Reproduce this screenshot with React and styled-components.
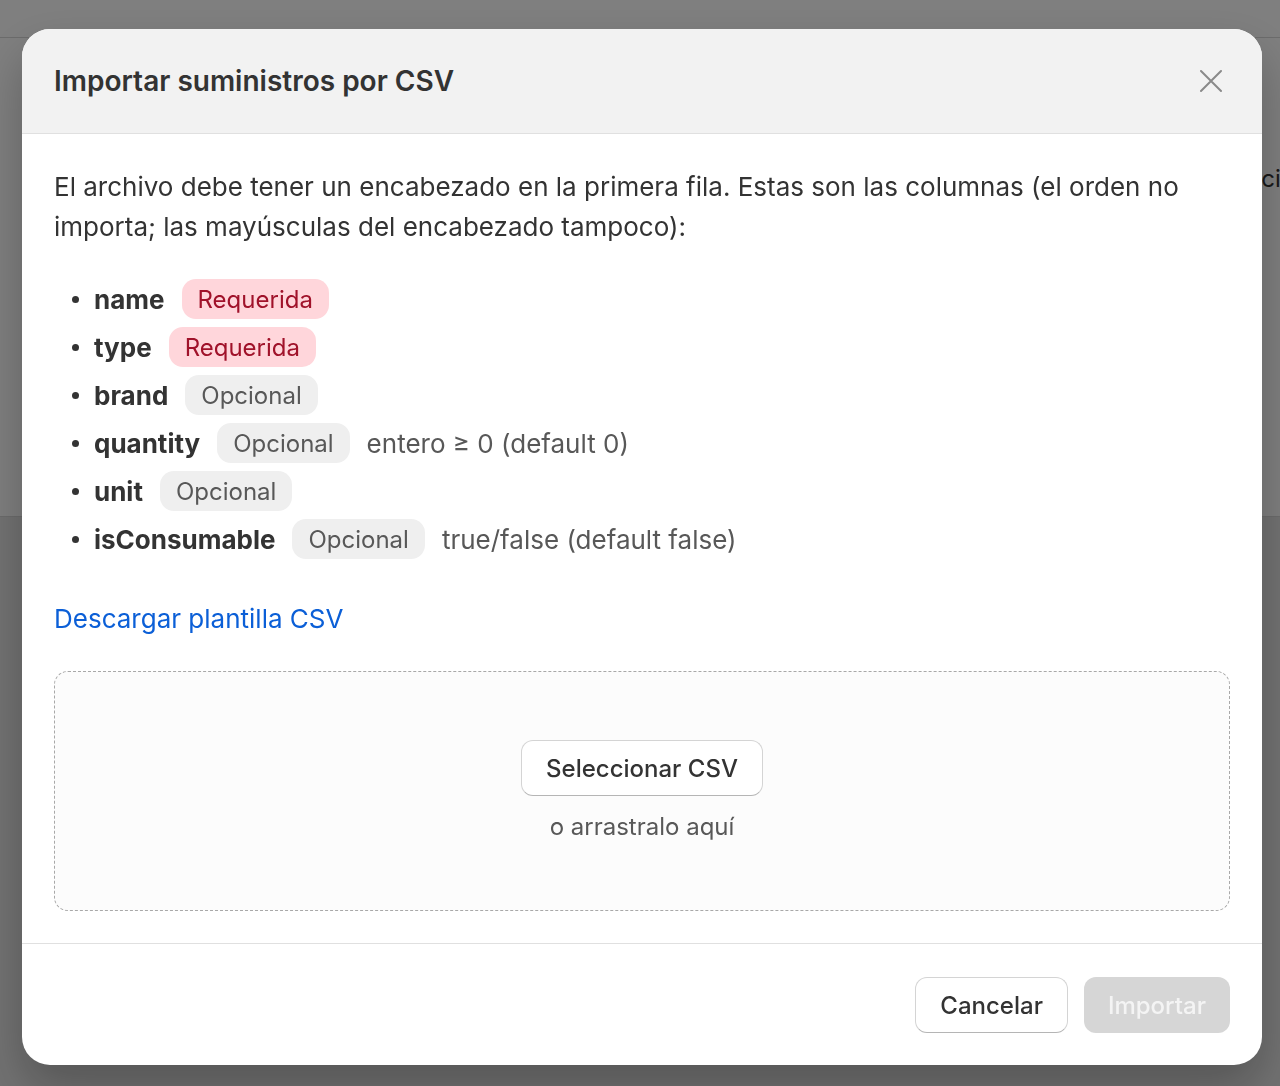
import React from 'react'
import styled, { createGlobalStyle } from 'styled-components'

const GlobalStyle = createGlobalStyle`
	* { box-sizing: border-box; }
	html, body { margin: 0; padding: 0; }
	body {
		font-family: Inter, "Noto Sans", "Liberation Sans", sans-serif;
		background: #e5e5e5;
		color: #333;
		overflow: hidden;
	}
`

const Page = styled.div`
	height: 1086px;
	display: flex;
	flex-direction: column;
`

const TopBar = styled.div`
	height: 38px;
	background: #fff;
	border-bottom: 1px solid #d8d8d8;
`

const PageCard = styled.div`
	height: 479px;
	background: #fff;
	border-bottom: 1px solid #d8d8d8;
	padding-top: 126px;
	overflow: hidden;
`

const PageHeading = styled.div`
	padding-left: 1231px;
	font-size: 24px;
	color: #333;
	white-space: nowrap;
`

const Overlay = styled.div`
	position: fixed;
	inset: 0;
	background: rgba(0, 0, 0, 0.5);
	display: flex;
	align-items: flex-start;
	padding: 29px 18px 0 22px;
`

const Modal = styled.div`
	width: 1240px;
	background: #fff;
	border-radius: 28px;
	overflow: hidden;
	box-shadow: 0 24px 48px rgba(0, 0, 0, 0.25);
`

const Header = styled.header`
	height: 105px;
	background: #f2f2f2;
	border-bottom: 1px solid #e0e0e0;
	display: flex;
	align-items: center;
	justify-content: space-between;
	padding: 0 38px 0 32px;
`

const Title = styled.h2`
	margin: 0;
	font-size: 28px;
	font-weight: 600;
	color: #333;
`

const CloseButton = styled.button`
	border: 0;
	background: none;
	padding: 0;
	width: 26px;
	height: 26px;
	display: flex;
	align-items: center;
	justify-content: center;
	cursor: pointer;
`

const Body = styled.div`
	padding: 33px 32px 32px;
`

const Intro = styled.p`
	margin: 0;
	font-size: 26px;
	line-height: 40px;
	color: #333;
`

const List = styled.ul`
	list-style: none;
	margin: 32px 0 0;
	padding: 0;
	display: flex;
	flex-direction: column;
	gap: 8px;
`

const Item = styled.li`
	display: flex;
	align-items: center;
	height: 40px;
	font-size: 26px;
`

const Dot = styled.span`
	width: 7px;
	height: 7px;
	border-radius: 50%;
	background: #333;
	margin: 0 15px 0 18px;
	flex: none;
`

const Name = styled.strong`
	font-weight: 700;
	color: #333;
	margin-right: 17px;
`

const Badge = styled.span`
	display: inline-flex;
	align-items: center;
	height: 40px;
	padding: 0 16px;
	border-radius: 14px;
	font-size: 24px;
	background: ${p => (p.$required ? '#ffd6db' : '#efefef')};
	color: ${p => (p.$required ? '#a0122a' : '#585858')};
`

const Note = styled.span`
	margin-left: 17px;
	color: #585858;
`

const TemplateLink = styled.a`
	display: inline-block;
	margin-top: 40px;
	font-size: 26px;
	line-height: 40px;
	color: #0b5fd7;
	text-decoration: none;
	cursor: pointer;
`

const DropZone = styled.div`
	margin-top: 32px;
	height: 240px;
	border: 1px dashed #a8a8a8;
	border-radius: 14px;
	background: #fcfcfc;
	display: flex;
	flex-direction: column;
	align-items: center;
	padding-top: 68px;
`

const Button = styled.button`
	height: 56px;
	padding: 0 24px;
	border-radius: 12px;
	font-family: inherit;
	font-size: 24px;
	font-weight: 500;
	cursor: pointer;
	border: ${p => (p.$disabled ? '0' : '1px solid #d4d4d4')};
	border-bottom-color: ${p => (p.$disabled ? 'transparent' : '#b5b5b5')};
	background: ${p => (p.$disabled ? '#d6d6d6' : '#fff')};
	color: ${p => (p.$disabled ? '#f4f4f4' : '#333')};
`

const DropHint = styled.div`
	margin-top: 11px;
	font-size: 24px;
	line-height: 40px;
	color: #585858;
`

const Footer = styled.footer`
	border-top: 1px solid #e0e0e0;
	padding: 33px 32px 32px;
	display: flex;
	justify-content: flex-end;
	gap: 16px;
`

const columns = [
	{ name: 'name', required: true },
	{ name: 'type', required: true },
	{ name: 'brand' },
	{ name: 'quantity', note: 'entero ≥ 0 (default 0)' },
	{ name: 'unit' },
	{ name: 'isConsumable', note: 'true/false (default false)' },
]

export default function App() {
	return (
		<>
			<GlobalStyle />
			<Page>
				<TopBar />
				<PageCard>
					<PageHeading>Acciones</PageHeading>
				</PageCard>
			</Page>
			<Overlay>
				<Modal>
					<Header>
						<Title>Importar suministros por CSV</Title>
						<CloseButton aria-label="Cerrar">
							<svg width="24" height="24" viewBox="0 0 24 24" fill="none" stroke="#8a8a8a" strokeWidth="2" strokeLinecap="round">
								<path d="M2 2L22 22M22 2L2 22" />
							</svg>
						</CloseButton>
					</Header>
					<Body>
						<Intro>
							El archivo debe tener un encabezado en la primera fila. Estas son las columnas (el orden no importa; las mayúsculas del encabezado tampoco):
						</Intro>
						<List>
							{columns.map(c => (
								<Item key={c.name}>
									<Dot />
									<Name>{c.name}</Name>
									<Badge $required={c.required}>{c.required ? 'Requerida' : 'Opcional'}</Badge>
									{c.note && <Note>{c.note}</Note>}
								</Item>
							))}
						</List>
						<TemplateLink>Descargar plantilla CSV</TemplateLink>
						<DropZone>
							<Button>Seleccionar CSV</Button>
							<DropHint>o arrastralo aquí</DropHint>
						</DropZone>
					</Body>
					<Footer>
						<Button>Cancelar</Button>
						<Button $disabled>Importar</Button>
					</Footer>
				</Modal>
			</Overlay>
		</>
	)
}
